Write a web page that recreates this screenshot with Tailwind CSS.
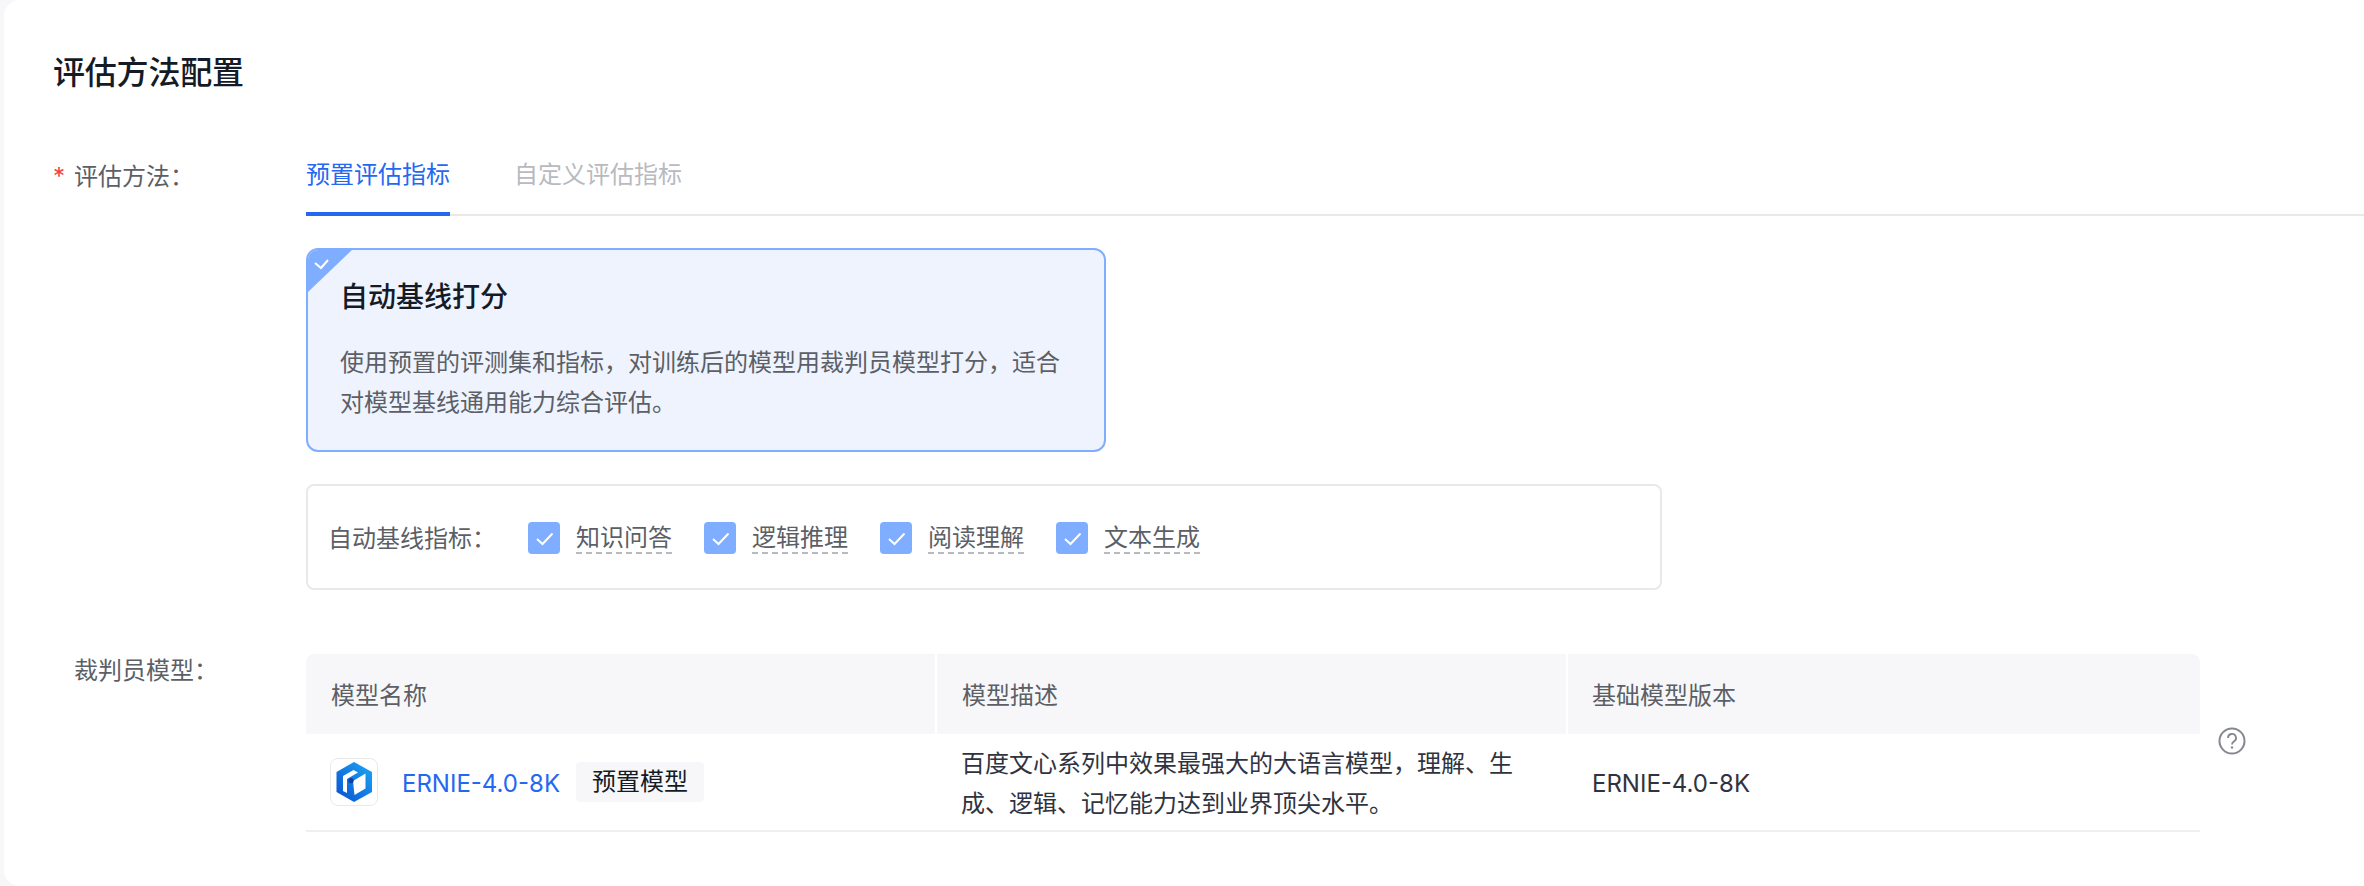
<!DOCTYPE html>
<html lang="zh-CN">
<head>
    <meta charset="UTF-8">
    <title>评估方法配置</title>
    <script src="https://cdn.jsdelivr.net/npm/@tailwindcss/browser@4"></script>
</head>
<body class="bg-[#f7f7f9] font-['Inter','Noto_Sans_CJK_SC',sans-serif] text-[24px] leading-[36px] text-[#2f3340] overflow-hidden">
    <main class="h-[886px] ml-[4px] pl-[49px] pt-[53px] bg-white rounded-l-[16px]">
        <h1 class="text-[32px] leading-[40px] font-medium tracking-[-0.2px] text-[#151b26]">评估方法配置</h1>

        <!-- method row -->
        <section class="flex mt-[61px]">
            <label class="w-[253px] shrink-0 pt-[5px] text-[#5c5f66]"><span class="text-[#f33e3e] mr-[9px]">*</span>评估方法：</label>
            <div class="flex-1">
                <div class="flex gap-[64px] border-b-2 border-[#e8e9eb] h-[62px]">
                    <div class="h-[62px] pt-[3px] border-b-4 border-[#2468f2] text-[#2468f2]">预置评估指标</div>
                    <div class="pt-[3px] text-[#b8babf]">自定义评估指标</div>
                </div>

                <div class="relative overflow-hidden w-[800px] h-[204px] mt-[32px] pl-[32px] pt-[27px] bg-[#eef3fe] border-2 border-[#7fadff] rounded-[12px]">
                    <svg class="absolute -left-[2px] -top-[2px]" width="48" height="46" viewBox="0 0 48 46">
                        <path d="M0 0H48L0 46Z" fill="#7fadff"/>
                        <path d="M9 15L15 20L22 12" fill="none" stroke="#fff" stroke-width="2"/>
                    </svg>
                    <h2 class="text-[28px] leading-[40px] font-medium text-[#151b26]">自动基线打分</h2>
                    <p class="mt-[26px] w-[730px] text-[#5c5f66] leading-[40px]">使用预置的评测集和指标，对训练后的模型用裁判员模型打分，适合对模型基线通用能力综合评估。</p>
                </div>

                <div class="flex items-center w-[1356px] h-[106px] mt-[32px] pl-[20px] border-2 border-[#e8e9eb] rounded-[8px] text-[#5c5f66]">
                    <span class="w-[200px] pt-[4px]">自动基线指标：</span>
                    <div class="flex gap-[32px] pt-[2px]">
                        <div class="flex items-center gap-[16px]">
                            <svg width="32" height="32" viewBox="0 0 32 32"><rect width="32" height="32" rx="4" fill="#7fadff"/><path d="M9 17L14.5 22L24.5 11.5" fill="none" stroke="#fff" stroke-width="2"/></svg>
                            <span class="pt-[2px] leading-[28px] border-b-2 border-dashed border-[#b8babf]">知识问答</span>
                        </div>
                        <div class="flex items-center gap-[16px]">
                            <svg width="32" height="32" viewBox="0 0 32 32"><rect width="32" height="32" rx="4" fill="#7fadff"/><path d="M9 17L14.5 22L24.5 11.5" fill="none" stroke="#fff" stroke-width="2"/></svg>
                            <span class="pt-[2px] leading-[28px] border-b-2 border-dashed border-[#b8babf]">逻辑推理</span>
                        </div>
                        <div class="flex items-center gap-[16px]">
                            <svg width="32" height="32" viewBox="0 0 32 32"><rect width="32" height="32" rx="4" fill="#7fadff"/><path d="M9 17L14.5 22L24.5 11.5" fill="none" stroke="#fff" stroke-width="2"/></svg>
                            <span class="pt-[2px] leading-[28px] border-b-2 border-dashed border-[#b8babf]">阅读理解</span>
                        </div>
                        <div class="flex items-center gap-[16px]">
                            <svg width="32" height="32" viewBox="0 0 32 32"><rect width="32" height="32" rx="4" fill="#7fadff"/><path d="M9 17L14.5 22L24.5 11.5" fill="none" stroke="#fff" stroke-width="2"/></svg>
                            <span class="pt-[2px] leading-[28px] border-b-2 border-dashed border-[#b8babf]">文本生成</span>
                        </div>
                    </div>
                </div>
            </div>
        </section>

        <!-- judge model row -->
        <section class="flex mt-[64px]">
            <label class="w-[253px] shrink-0 -mt-[1px] pl-[21px] text-[#5c5f66]">裁判员模型：</label>
            <div class="flex items-center">
                <div class="w-[1894px]">
                    <div class="grid grid-cols-[629px_631px_634px] h-[80px] bg-[#f7f7f9] rounded-t-[8px] text-[#5c5f66] items-center">
                        <div class="pl-[25px] pt-[4px] h-full flex items-center">模型名称</div>
                        <div class="pl-[25px] pt-[4px] h-full flex items-center border-l-2 border-white">模型描述</div>
                        <div class="pl-[24px] pt-[4px] h-full flex items-center border-l-2 border-white">基础模型版本</div>
                    </div>
                    <div class="grid grid-cols-[629px_631px_634px] h-[98px] border-b-2 border-[#eeeff1] items-center">
                        <div class="pl-[24px] flex items-center">
                            <div class="flex items-center justify-center w-[48px] h-[48px] border border-[#e8e9eb] rounded-[8px] mr-[24px]">
                                <svg width="44" height="44" viewBox="0 0 44 44">
                                    <defs><linearGradient id="hex" x1="1" y1="0" x2="0" y2="1"><stop offset="0" stop-color="#1ca8f7"/><stop offset="1" stop-color="#0a4fd0"/></linearGradient></defs>
                                    <path d="M22 2L40 12V32L22 42L4.500 32V12Z" fill="url(#hex)"/>
                                    <path d="M11 16L21.500 10L26 12.500L17.500 17.500L15 19V33L11 31Z" fill="#fff"/>
                                    <path d="M21 21L33.500 13.500V28.500L22.500 35Z" fill="#fff"/>
                                    <circle cx="19" cy="20.700" r="2.600" fill="#0b3fa8"/>
                                </svg>
                            </div>
                            <span class="pt-[4px] text-[#2468f2]">ERNIE-4.0-8K</span>
                            <span class="ml-[16px] px-[16px] h-[40px] leading-[40px] bg-[#f7f7f9] rounded-[4px] text-[#151b26]">预置模型</span>
                        </div>
                        <div class="pl-[26px] pr-[50px] pt-[4px] leading-[40px] text-[#2f3340]">百度文心系列中效果最强大的大语言模型，理解、生成、逻辑、记忆能力达到业界顶尖水平。</div>
                        <div class="pl-[26px] pt-[4px] text-[#2f3340]">ERNIE-4.0-8K</div>
                    </div>
                </div>
                <svg class="ml-[18px] mb-[4px]" width="28" height="28" viewBox="0 0 28 28">
                    <circle cx="14" cy="14" r="12.500" fill="none" stroke="#85888f" stroke-width="2"/>
                    <path d="M10 11a4 4 0 1 1 6 3.400c-1.400.8-2 1.400-2 3" fill="none" stroke="#85888f" stroke-width="1.800"/>
                    <circle cx="14" cy="20.500" r="1.200" fill="#85888f"/>
                </svg>
            </div>
        </section>
    </main>
</body>
</html>
